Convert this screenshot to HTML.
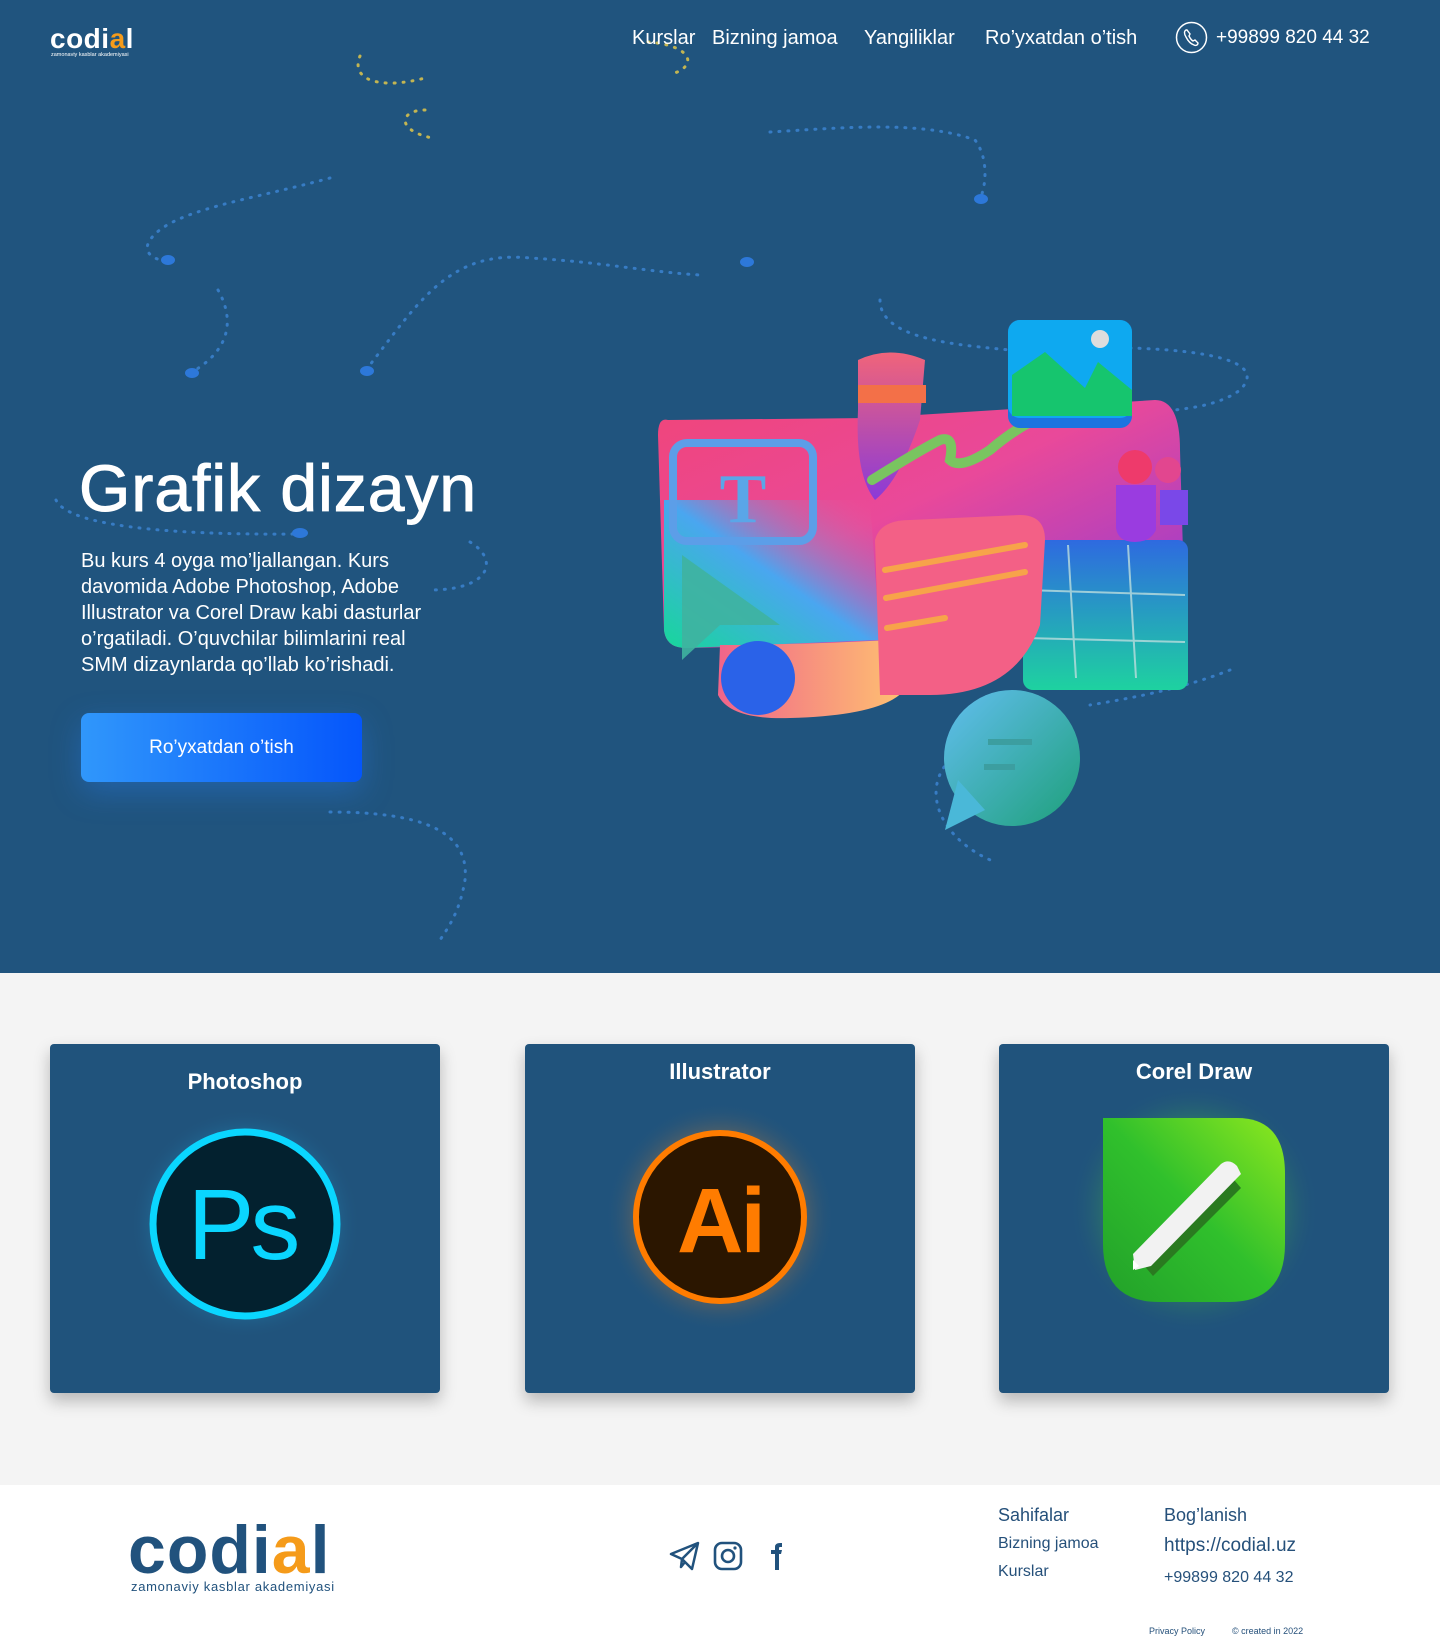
<!DOCTYPE html>
<html><head><meta charset="utf-8"><style>
*{margin:0;padding:0;box-sizing:border-box}
body{width:1440px;height:1649px;overflow:hidden;font-family:"Liberation Sans",sans-serif;background:#fff;position:relative}
.hero{position:absolute;left:0;top:0;width:1440px;height:973px;background:#20547e;overflow:hidden}
.gray{position:absolute;left:0;top:973px;width:1440px;height:512px;background:#f4f4f4}
.foot{position:absolute;left:0;top:1485px;width:1440px;height:164px;background:#fff}
.abs{position:absolute}
.nav{color:#fff;font-size:20px;top:27px;white-space:nowrap}
h1{position:absolute;left:79px;top:450px;font-size:66px;font-weight:normal;color:#fff;letter-spacing:1px;-webkit-text-stroke:1px #fff;white-space:nowrap}
.para{position:absolute;left:81px;top:548px;width:420px;font-size:20px;line-height:26px;color:#fff;white-space:nowrap}
.btn{position:absolute;left:81px;top:713px;width:281px;height:69px;border-radius:8px;background:linear-gradient(90deg,#3097fb,#0556fb);color:#fff;font-size:19px;text-align:center;line-height:69px;box-shadow:0 10px 30px rgba(40,130,250,.35)}
.card{position:absolute;top:1044px;width:390px;height:349px;background:#20537c;border-radius:4px;box-shadow:0 8px 16px rgba(0,0,0,.25)}
.card .t{position:absolute;width:100%;text-align:center;color:#fff;font-size:22px;font-weight:bold}
.fl{color:#25507a;font-size:17px}
</style></head><body>
<div class="hero">
<svg class="abs" style="left:0;top:0" width="1440" height="973">
<g fill="none" stroke="#3d86d6" stroke-width="3" stroke-dasharray="1 8" stroke-linecap="round" opacity=".8">
<path d="M330 178 C250 200 170 210 150 240 C140 255 160 262 168 260"/>
<path d="M218 290 C235 320 230 350 192 372"/>
<path d="M366 370 C420 300 450 250 530 258 C600 262 650 272 700 275"/>
<path d="M770 132 C840 128 920 120 975 140 C990 160 985 190 980 198"/>
<path d="M880 300 C880 340 960 345 1010 350"/>
<path d="M1130 348 C1200 350 1270 360 1240 390 C1220 405 1190 408 1175 410"/>
<path d="M56 500 C70 530 200 535 298 534"/>
<path d="M470 542 C500 560 490 590 430 590"/>
<path d="M330 812 C420 812 470 830 465 880 C460 910 450 925 440 940"/>
<path d="M1230 670 C1180 690 1120 700 1090 705"/>
<path d="M950 760 C920 790 940 840 995 862"/>
</g>
<g fill="none" stroke="#c3b552" stroke-width="3" stroke-dasharray="1 8" stroke-linecap="round">
<path d="M360 56 C350 80 380 90 425 78"/>
<path d="M425 110 C400 110 395 130 432 138"/>
<path d="M648 42 C690 45 700 65 672 74"/>
</g>
<g fill="#2d78d9"><ellipse cx="168" cy="260" rx="7" ry="5"/><ellipse cx="192" cy="373" rx="7" ry="5"/><ellipse cx="367" cy="371" rx="7" ry="5"/><ellipse cx="747" cy="262" rx="7" ry="5"/><ellipse cx="981" cy="199" rx="7" ry="5"/><ellipse cx="300" cy="533" rx="8" ry="5"/></g>
</svg>
<svg class="abs" style="left:50px;top:24px" width="100" height="34" viewBox="0 0 100 34">
<text x="0" y="24" font-family="Liberation Sans" font-size="28" font-weight="bold" fill="#fff" letter-spacing="0.5">codi<tspan fill="#f59b1a">a</tspan>l</text>
<text x="1" y="32" font-family="Liberation Sans" font-size="5.5" fill="#fff">zamonaviy kasblar akademiyasi</text>
</svg>
<div class="abs nav" style="left:632px">Kurslar</div>
<div class="abs nav" style="left:712px">Bizning jamoa</div>
<div class="abs nav" style="left:864px">Yangiliklar</div>
<div class="abs nav" style="left:985px">Ro’yxatdan o’tish</div>
<svg class="abs" style="left:1175px;top:21px" width="33" height="33" viewBox="0 0 33 33"><circle cx="16.5" cy="16.5" r="15" fill="none" stroke="#fff" stroke-width="1.5"/><path d="M11 9c-2 1-2 4 0 7 2 4 5 7 8 8 2 1 4 0 4-2l-3-3-2 1c-2-1-3-3-4-5l1-2-3-4z" fill="none" stroke="#fff" stroke-width="1.4"/></svg>
<div class="abs nav" style="left:1216px;font-size:19px;top:27px">+99899 820 44 32</div>

<h1>Grafik dizayn</h1>
<div class="para">Bu kurs 4 oyga mo’ljallangan. Kurs<br>davomida Adobe Photoshop, Adobe<br>Illustrator va Corel Draw kabi dasturlar<br>o’rgatiladi. O’quvchilar bilimlarini real<br>SMM dizaynlarda qo’llab ko’rishadi.</div>
<div class="btn">Ro’yxatdan o’tish</div>

<svg class="abs" style="left:640px;top:300px" width="620" height="570" viewBox="0 0 620 570">
<defs>
<linearGradient id="b1" x1="0" y1="0" x2="1" y2="1"><stop offset="0" stop-color="#f0457a"/><stop offset=".45" stop-color="#e9499a"/><stop offset="1" stop-color="#8a3ad8"/></linearGradient>
<linearGradient id="b2" x1="0" y1="1" x2="1" y2="0"><stop offset="0" stop-color="#17d79a"/><stop offset=".5" stop-color="#4aa6f0"/><stop offset="1" stop-color="#ff4f8c" stop-opacity="0"/></linearGradient>
<linearGradient id="g3" x1="0" y1="0" x2="0" y2="1"><stop offset="0" stop-color="#2e6ae0"/><stop offset="1" stop-color="#1ed2a0"/></linearGradient>
<linearGradient id="bub" x1="0" y1="0" x2="1" y2="1"><stop offset="0" stop-color="#62bef0"/><stop offset="1" stop-color="#1ea07a"/></linearGradient>
<linearGradient id="sw" x1="0" y1="0" x2="1" y2="0"><stop offset="0" stop-color="#f0648a"/><stop offset="1" stop-color="#ffc570"/></linearGradient>
<linearGradient id="pen" x1="0" y1="0" x2="0" y2="1"><stop offset="0" stop-color="#f0647a"/><stop offset="1" stop-color="#8a3ad8"/></linearGradient>
</defs>
<path d="M28 120 Q18 117 18 135 L24 330 Q26 348 46 348 L530 338 Q545 338 545 320 L540 150 Q540 100 515 100 L230 118 Z" fill="url(#b1)"/>
<path d="M24 200 L24 330 Q26 348 46 348 L240 340 L230 200 Z" fill="url(#b2)"/>
<rect x="383" y="240" width="165" height="150" rx="10" fill="url(#g3)"/>
<g stroke="#bdd" stroke-width="2" opacity=".8"><line x1="428" y1="245" x2="436" y2="378"/><line x1="488" y1="245" x2="496" y2="378"/><line x1="385" y1="290" x2="545" y2="295"/><line x1="385" y1="338" x2="545" y2="342"/></g>
<rect x="33" y="143" width="140" height="98" rx="14" fill="none" stroke="#5c9ee8" stroke-width="8"/>
<text x="103" y="222" font-family="Liberation Serif" font-size="70" font-weight="bold" fill="#5aa6e8" text-anchor="middle">T</text>
<path d="M42 255 L42 360 L80 325 L140 325 Z" fill="#3fb3a0" opacity=".9"/>
<path d="M80 345 Q150 345 250 340 Q275 345 270 380 Q260 415 150 418 Q90 420 78 395 Z" fill="url(#sw)"/>
<circle cx="118" cy="378" r="37" fill="#2a62e8"/>
<path d="M235 240 Q240 220 270 220 L380 215 Q405 215 405 240 L400 325 Q375 395 290 395 L240 395 Z" fill="#f36086"/>
<g stroke="#f7a34a" stroke-width="6" stroke-linecap="round"><line x1="245" y1="270" x2="385" y2="245"/><line x1="246" y1="298" x2="385" y2="272"/><line x1="247" y1="328" x2="305" y2="318"/></g>
<path d="M218 60 Q250 45 285 60 L280 120 Q260 180 235 200 Q215 175 218 110 Z" fill="url(#pen)"/>
<rect x="218" y="85" width="68" height="18" fill="#f37048"/>
<path d="M232 180 Q280 150 300 140 Q315 135 310 160 Q320 170 350 150 Q385 120 420 110" fill="none" stroke="#79c560" stroke-width="10" stroke-linecap="round"/>
<rect x="368" y="20" width="124" height="108" rx="12" fill="#1c74e0"/>
<rect x="368" y="20" width="124" height="98" rx="12" fill="#0ea9f0"/>
<path d="M372 75 L405 52 L445 88 L458 62 L492 90 L492 116 L372 116 Z" fill="#16c56e"/>
<circle cx="460" cy="39" r="9" fill="#ddd"/>
<circle cx="495" cy="167" r="17" fill="#ee3a6b"/><circle cx="528" cy="170" r="13" fill="#e2468f"/>
<path d="M476 185 L516 185 L516 230 Q510 242 495 242 Q478 242 476 228 Z" fill="#9a3ce0"/>
<path d="M520 190 L548 190 L548 225 L520 225 Z" fill="#7a48e8"/>
<circle cx="372" cy="458" r="68" fill="url(#bub)"/>
<path d="M318 480 L305 530 L345 510 Z" fill="#4ab8d8"/>
<g stroke="#3c9ea0" stroke-width="6"><line x1="348" y1="442" x2="392" y2="442"/><line x1="344" y1="467" x2="375" y2="467"/></g>
</svg>
</div>

<div class="gray">
<div class="card" style="left:50px;top:71px"><div class="t" style="top:25px">Photoshop</div>
<svg class="abs" style="left:80px;top:65px" width="230" height="230" viewBox="0 0 230 230"><defs><radialGradient id="gp"><stop offset=".6" stop-color="#1bb4e8" stop-opacity=".6"/><stop offset="1" stop-color="#20537c" stop-opacity="0"/></radialGradient></defs><circle cx="115" cy="115" r="115" fill="url(#gp)"/><circle cx="115" cy="115" r="92" fill="#03212f" stroke="#0ad6ff" stroke-width="7"/><text x="112" y="150" font-family="Liberation Sans" font-size="100" fill="#0ad6ff" text-anchor="middle" letter-spacing="-4">Ps</text></svg></div>
<div class="card" style="left:525px;top:71px"><div class="t" style="top:15px">Illustrator</div>
<svg class="abs" style="left:80px;top:58px" width="230" height="230" viewBox="0 0 230 230"><defs><radialGradient id="ga"><stop offset=".6" stop-color="#ff8a1a" stop-opacity=".45"/><stop offset="1" stop-color="#20537c" stop-opacity="0"/></radialGradient></defs><circle cx="115" cy="115" r="115" fill="url(#ga)"/><circle cx="115" cy="115" r="84" fill="#2b1600" stroke="#ff7c00" stroke-width="6"/><text x="115" y="150" font-family="Liberation Sans" font-size="92" font-weight="bold" fill="#ff7c00" text-anchor="middle" letter-spacing="-3">Ai</text></svg></div>
<div class="card" style="left:999px;top:71px"><div class="t" style="top:15px">Corel Draw</div>
<svg class="abs" style="left:70px;top:40px" width="250" height="250" viewBox="0 0 250 250"><defs><radialGradient id="gc"><stop offset=".55" stop-color="#4ed035" stop-opacity=".5"/><stop offset="1" stop-color="#20537c" stop-opacity="0"/></radialGradient><linearGradient id="cg" x1="0" y1="1" x2="1" y2="0"><stop offset="0" stop-color="#22a02a"/><stop offset=".5" stop-color="#30c02c"/><stop offset="1" stop-color="#8ee81e"/></linearGradient></defs><circle cx="125" cy="125" r="125" fill="url(#gc)"/><path d="M34 34 L168 34 Q216 34 216 90 L216 160 Q216 218 160 218 L90 218 Q34 218 34 160 Z" fill="url(#cg)"/><path d="M72 178 L160 90 L172 104 L84 192 Z" fill="#2a7a20"/><path d="M64 170 L152 80 Q160 74 168 82 L172 90 L82 182 L66 186 Z" fill="#f2f2f2"/><path d="M64 176 L70 182 L64 186 Z" fill="#fff"/></svg></div>
</div>

<div class="foot">
<svg class="abs" style="left:128px;top:30px" width="232" height="80" viewBox="0 0 232 80"><text x="0" y="58" font-family="Liberation Sans" font-size="68" font-weight="bold" fill="#21527d" letter-spacing="1">codi<tspan fill="#f59b1a">a</tspan>l</text><text x="3" y="76" font-family="Liberation Sans" font-size="13" fill="#21527d" letter-spacing="0.7">zamonaviy kasblar akademiyasi</text></svg>
<svg class="abs" style="left:668px;top:55px" width="122" height="32" viewBox="0 0 122 32"><path d="M3 14 L30 3 L24 29 L14 19 Z M14 19 L13 27 L17 22 M14 19 L30 3" fill="none" stroke="#21527d" stroke-width="2.5" stroke-linejoin="round"/><rect x="47" y="3" width="26" height="26" rx="7" fill="none" stroke="#21527d" stroke-width="2.6"/><circle cx="60" cy="16" r="6" fill="none" stroke="#21527d" stroke-width="2.6"/><circle cx="67" cy="8" r="1.6" fill="#21527d"/><path d="M107 30 L107 14 L103 14 L103 10 L107 10 L107 7 Q107 3 112 3 L114 3 L114 7 L112 7 Q111 7 111 8 L111 10 L114 10 L113 14 L111 14 L111 30 Z" fill="#21527d"/></svg>
<div class="abs fl" style="left:998px;top:20px;font-size:18px">Sahifalar</div>
<div class="abs fl" style="left:998px;top:50px;font-size:16px">Bizning jamoa</div>
<div class="abs fl" style="left:998px;top:78px;font-size:16px">Kurslar</div>
<div class="abs fl" style="left:1164px;top:20px;font-size:18px">Bog’lanish</div>
<div class="abs fl" style="left:1164px;top:50px;font-size:19px">https://codial.uz</div>
<div class="abs fl" style="left:1164px;top:84px;font-size:16px">+99899 820 44 32</div>
<div class="abs fl" style="left:1149px;top:141px;font-size:9px">Privacy Policy</div>
<div class="abs fl" style="left:1232px;top:141px;font-size:9px">© created in 2022</div>
</div>
</body></html>
